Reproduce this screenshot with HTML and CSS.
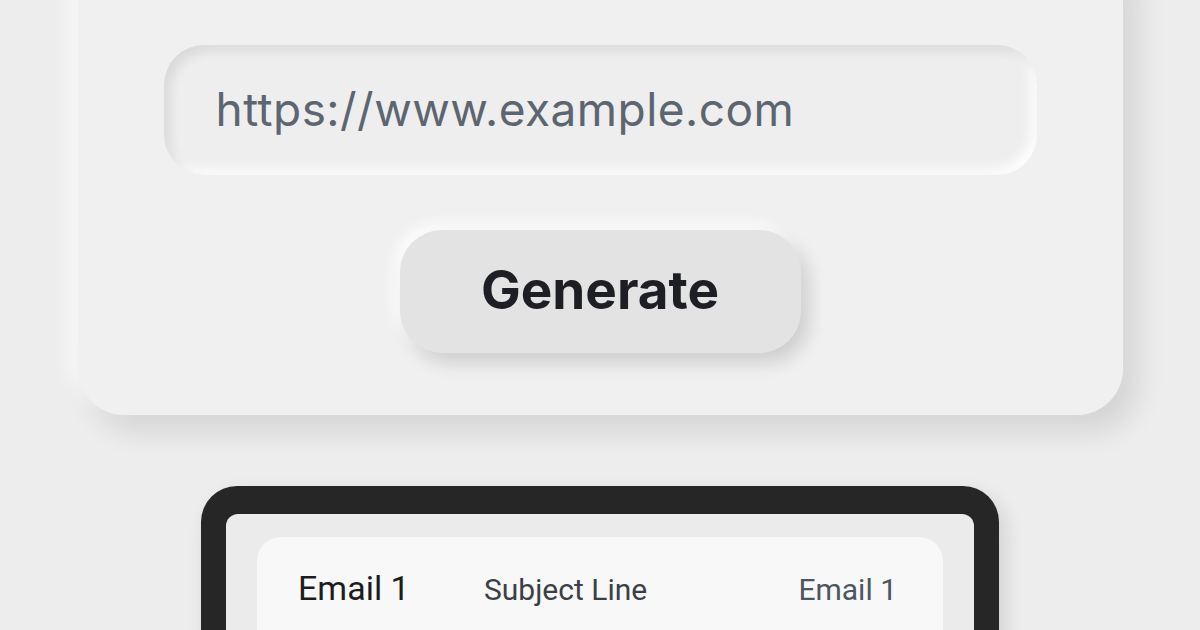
FILE: index.html
```html
<!DOCTYPE html>
<html lang="en">
<head>
    <meta charset="UTF-8">
    <meta name="viewport" content="width=device-width, initial-scale=1.0">
    <title>Email Generator</title>
    <link rel="stylesheet" href="styles.css">
</head>
<body>
    <!-- Formulário principal -->
    <section class="panel">
        <div class="url-field">
            <span class="url-text">https://www.example.com</span>
        </div>
        <button type="button" class="btn-generate">Generate</button>
    </section>

    <!-- Prévia dos emails gerados -->
    <section class="device">
        <div class="screen">
            <div class="email-row">
                <span class="email-name">Email 1</span>
                <span class="email-subject">Subject Line</span>
                <span class="email-tag">Email 1</span>
            </div>
        </div>
    </section>
</body>
</html>
```

FILE: styles.css
```css
/* Estilos básicos */
* {
    margin: 0;
    padding: 0;
    box-sizing: border-box;
}

html, body {
    height: 100%;
    overflow: hidden;
}

body {
    display: flex;
    flex-direction: column;
    align-items: center;
    background-color: #ededed;
    font-family: Inter, "Noto Sans", sans-serif;
}

.panel {
    width: 1045px;
    margin-top: -60px;
    padding: 105px 86px 62px;
    display: flex;
    flex-direction: column;
    align-items: center;
    background-color: #f0f0f0;
    border-radius: 46px;
    box-shadow: 14px 16px 30px rgba(0, 0, 0, 0.11), -8px -8px 20px rgba(255, 255, 255, 0.8);
}

.url-field {
    width: 100%;
    height: 130px;
    display: flex;
    align-items: center;
    padding-left: 52px;
    background-color: #eeeeee;
    border-radius: 40px;
    box-shadow: inset 6px 6px 12px rgba(0, 0, 0, 0.09), inset -6px -6px 12px rgba(255, 255, 255, 0.9);
}

.url-text {
    font-size: 46px;
    color: #5d6570;
    letter-spacing: 0.45px;
    margin-top: -2px;
}

.btn-generate {
    margin-top: 55px;
    width: 401px;
    height: 123px;
    padding-bottom: 4px;
    border: none;
    border-radius: 42px;
    background-color: #e3e3e3;
    font-family: Inter, "Noto Sans", sans-serif;
    font-size: 53px;
    font-weight: 700;
    color: #1e1f25;
    box-shadow: 8px 10px 18px rgba(0, 0, 0, 0.14), -6px -6px 14px rgba(255, 255, 255, 0.85);
}

.device {
    margin-top: 71px;
    width: 798px;
    flex-shrink: 0;
    height: 300px;
    border: 25px solid #262626;
    border-top-width: 28px;
    border-radius: 36px;
    background-color: #262626;
    box-shadow: 6px 8px 20px rgba(0, 0, 0, 0.12);
}

.screen {
    height: 100%;
    padding: 23px 31px 0;
    background-color: #ebebeb;
    border-radius: 12px;
}

.email-row {
    height: 200px;
    display: flex;
    align-items: flex-start;
    padding: 31px 46px 0 41px;
    background-color: #f8f8f8;
    border-radius: 24px;
    font-family: Roboto, "Liberation Sans", sans-serif;
}

.email-name {
    font-size: 34px;
    color: #1d1d1d;
    width: 186px;
}

.email-subject {
    font-size: 30px;
    color: #3b4048;
    margin-top: 4px;
}

.email-tag {
    margin-left: auto;
    font-size: 30px;
    color: #4c5562;
    margin-top: 4px;
}
```
